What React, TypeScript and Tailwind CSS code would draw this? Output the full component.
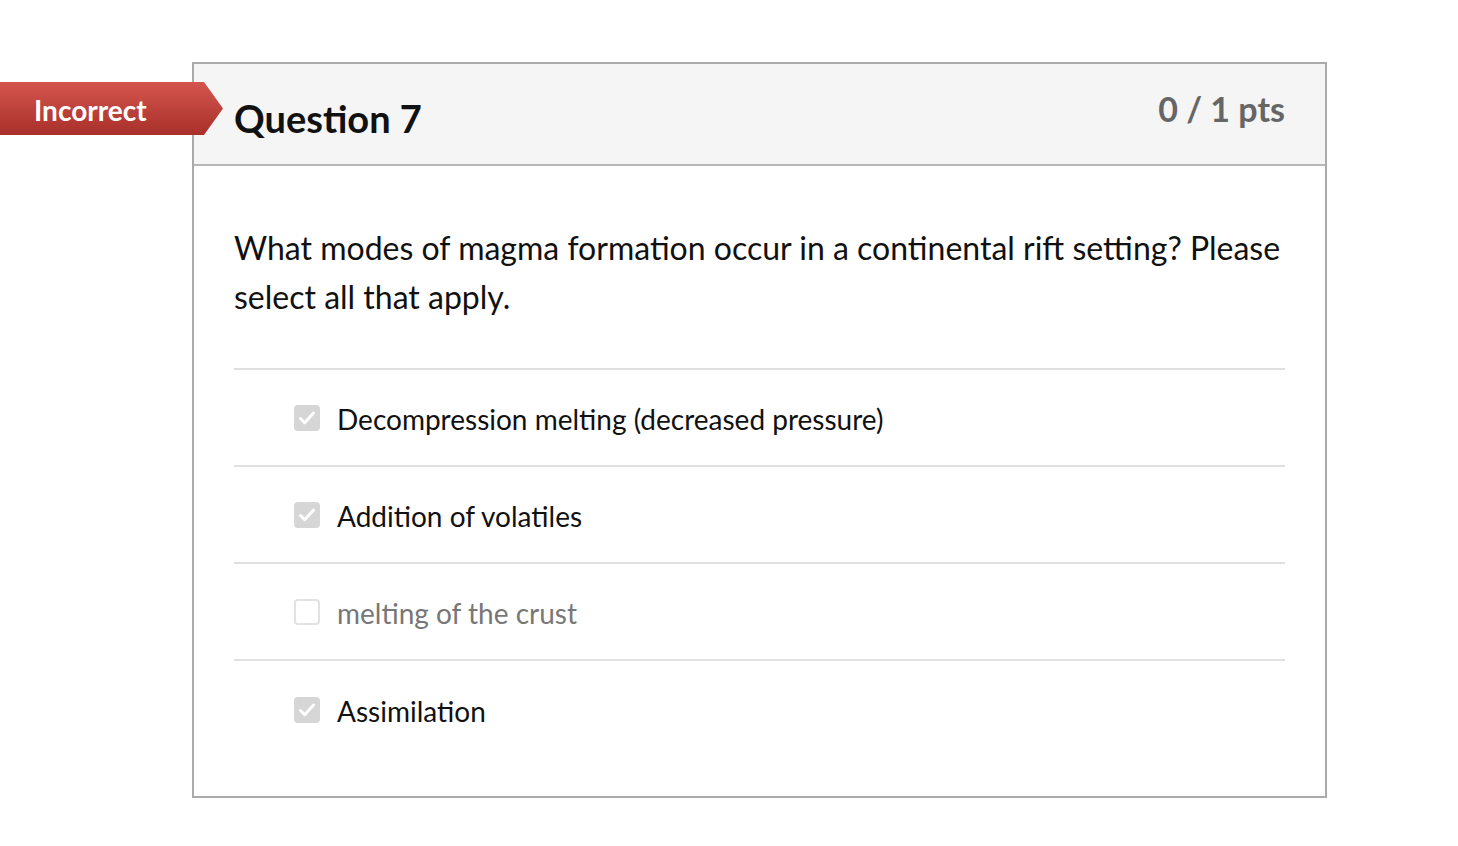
import React from "react";

const options = [
  { label: "Decompression melting (decreased pressure)", checked: true },
  { label: "Addition of volatiles", checked: true },
  { label: "melting of the crust", checked: false },
  { label: "Assimilation", checked: true },
];

const CheckBox: React.FC<{ checked: boolean }> = ({ checked }) =>
  checked ? (
    <span className="flex h-[26px] w-[26px] shrink-0 items-center justify-center rounded-[4px] bg-[#d6d6d6]">
      <svg width="20" height="20" viewBox="0 0 20 20" fill="none">
        <path d="M3.5 10.5l4.2 4.2L16.5 5" stroke="#fff" strokeWidth="3" strokeLinecap="round" strokeLinejoin="round" />
      </svg>
    </span>
  ) : (
    <span className="h-[26px] w-[26px] shrink-0 rounded-[4px] border-2 border-[#e2e2e2] bg-white" />
  );

export default function App() {
  return (
    <div className="relative min-h-[846px] w-full bg-white font-['Lato','Noto_Sans',sans-serif]">
      {/* incorrect badge */}
      <div className="absolute left-0 top-[82px] z-10 flex h-[53px] items-center">
        <div className="flex h-full w-[204px] items-center bg-gradient-to-b from-[#d4554e] to-[#a92f2a] pb-[1px] pl-[34px] pt-[3px] text-[28px] font-bold text-white">
          Incorrect
        </div>
        <div className="h-full w-[19px] bg-gradient-to-b from-[#d4554e] to-[#a92f2a] [clip-path:polygon(0_0,100%_50%,0_100%)]" />
      </div>

      <div className="pl-[192px] pt-[62px]">
        <div className="w-[1135px] border-2 border-[#aaaaaa]">
          <div className="flex h-[102px] items-start justify-between border-b-2 border-[#b8b8b8] bg-[#f5f5f5] px-[40px]">
            <h2 className="mt-[31px] text-[38px] font-bold leading-[46px] text-[#111]">Question 7</h2>
            <div className="mt-[25px] text-[34px] font-bold leading-[40px] text-[#666]">0 / 1 pts</div>
          </div>

          <div className="px-[40px] pb-[38px] pt-[57px]">
            <p className="text-[32px] leading-[49px] text-[#111]">
              What modes of magma formation occur in a continental rift setting? Please select all that apply.
            </p>
            <div className="mt-[47px] border-t-2 border-[#e0e0e0]">
              {options.map((o, i) => (
                <div
                  key={o.label}
                  className={`flex h-[97px] items-center gap-[17px] pl-[60px] ${i < options.length - 1 ? "border-b-2 border-[#e0e0e0]" : ""}`}
                >
                  <CheckBox checked={o.checked} />
                  <span className={`pt-[3px] text-[28px] ${o.checked ? "text-[#111]" : "text-[#777]"}`}>{o.label}</span>
                </div>
              ))}
            </div>
          </div>
        </div>
      </div>
    </div>
  );
}
